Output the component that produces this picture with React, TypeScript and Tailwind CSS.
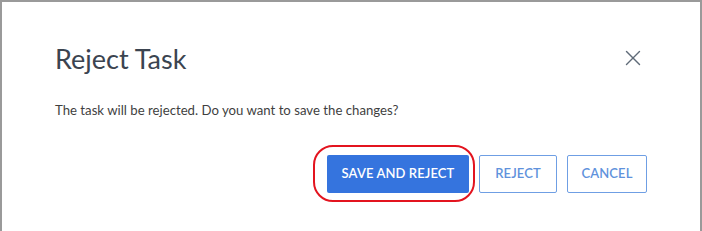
import { X } from "lucide-react";

export default function App() {
  return (
    <div className="h-[231px] w-[702px] overflow-hidden bg-[#9a9a9a] pl-[2px] pt-[2px]">
      <div
        className="relative h-[240px] w-[698px] bg-white text-[#3d4651]"
        style={{ fontFamily: '"Source Sans Pro", "Lato", "Open Sans", sans-serif' }}
      >
        <div className="flex items-center justify-between pl-[53px] pr-[54px] pt-[40px]">
          <h2 className="text-[27px] leading-[34px] font-normal text-[#3b4450]">Reject Task</h2>
          <X className="-mt-[2px] h-[26px] w-[26px] text-[#5f6b78]" strokeWidth={1.3} />
        </div>
        <p className="mt-[25px] pl-[53px] text-[13.2px] leading-[18px] text-[#3f3f3f]">
          The task will be rejected. Do you want to save the changes?
        </p>
        <div className="mt-[36px] flex justify-end gap-[10px] pr-[53px]">
          <div className="relative">
            <button
              type="button"
              className="h-[38px] w-[142px] rounded-[2px] bg-[#3574de] text-[13px] font-semibold tracking-[0.1px] text-white"
            >
              SAVE AND REJECT
            </button>
            <div className="pointer-events-none absolute -left-[14px] -top-[10px] h-[57px] w-[162px] rounded-[20px] border-[2.5px] border-[#e3141f]" />
          </div>
          <button
            type="button"
            className="h-[38px] w-[78px] rounded-[2px] border border-[#6f9fe4] text-[13px] font-semibold tracking-[0.1px] text-[#5f92dc]"
          >
            REJECT
          </button>
          <button
            type="button"
            className="h-[38px] w-[80px] rounded-[2px] border border-[#6f9fe4] text-[13px] font-semibold tracking-[0.1px] text-[#5f92dc]"
          >
            CANCEL
          </button>
        </div>
      </div>
    </div>
  );
}
